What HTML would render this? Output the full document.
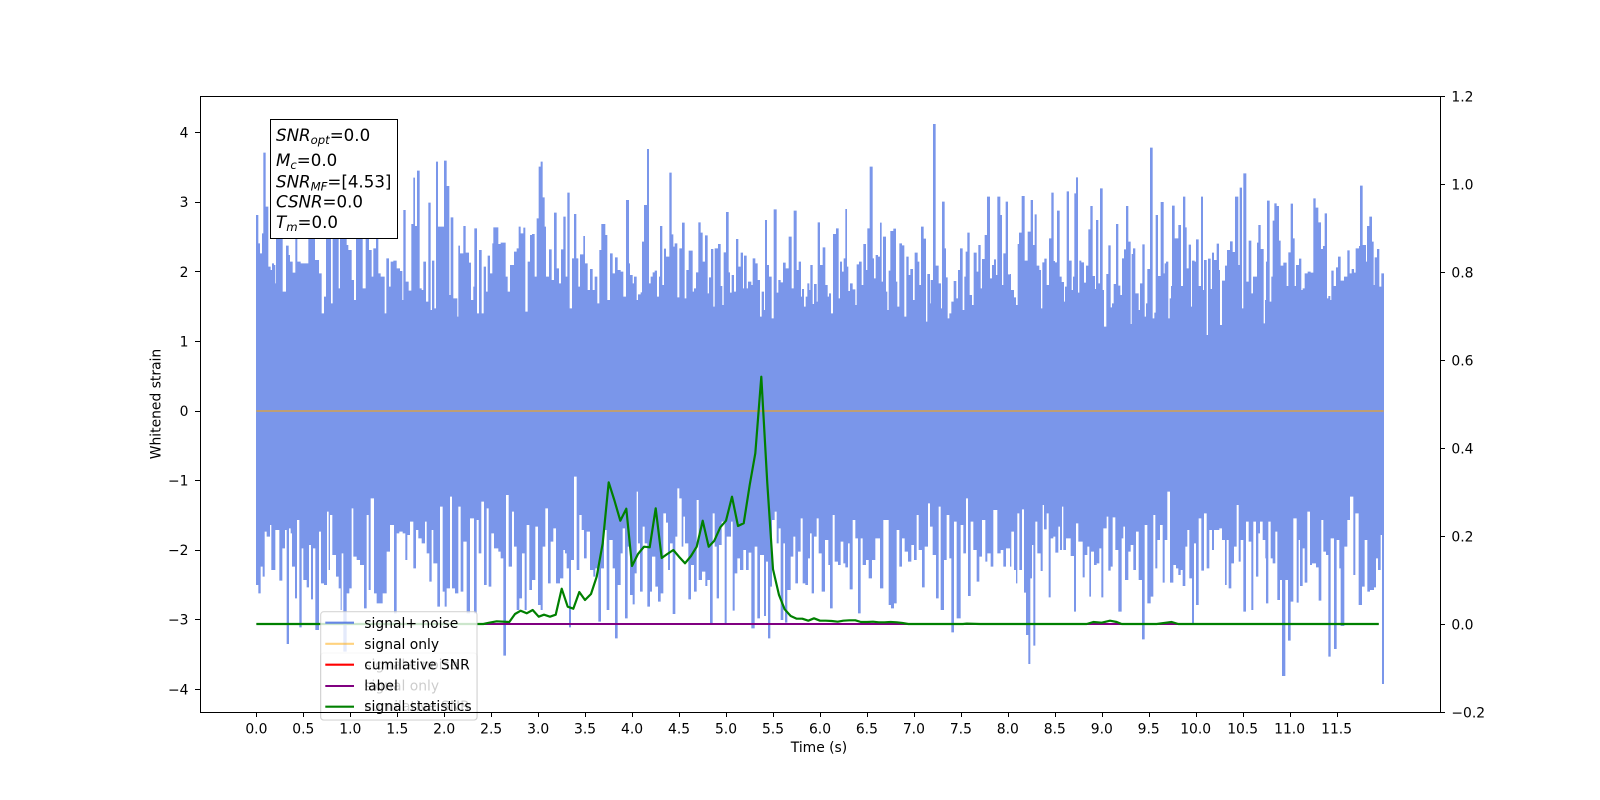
<!DOCTYPE html>
<html>
<head>
<meta charset="utf-8">
<style>
html,body{margin:0;padding:0;background:#fff;width:1600px;height:800px;overflow:hidden}
svg{display:block}
text{font-family:"DejaVu Sans",sans-serif;font-size:13.89px;fill:#000}
</style>
</head>
<body>
<svg width="1600" height="800" viewBox="0 0 1600 800" xmlns="http://www.w3.org/2000/svg">
<rect width="1600" height="800" fill="#fff"/>

<g fill="#7a96ea">
<rect x="256" y="339" width="1128" height="132"/>
<path transform="translate(250,100) scale(.33333)" d="M18 720V345H25V430H30V460H36V400H40V158H47V320H55V500H62V510H66V490H72V495H76V550H78V415H98V575H108V437H116V465H120V485H128V518H136V415H142V485H152V490H175V415H195V480H207V520H215V640H222V590H228V415H243V610H248V415H266V565H270V415H290V435H295V450H305V540H312V600H318V415H338V565H347V415H357V450H365V530H370V445H378V415H385V520H392V530H404V640H409V475H417V560H422V485H430V482H440V505H450V513H457V600H460V330H467V545H476V572H484V372H490V233H495V378H501V212H509V565H515V570H520V485H528V605H535V308H542V630H546V482H553V625H558V185H564V380H582V182H590V258H598V585H602V352H610V595H622V650H625V437H630V460H640V378H647V458H657V488H663V600H670V560H673V385H681V640H687V450H695V640H701V500H708V575H713V467H720V520H727V430H730V382H745V432H752V428H767V530H773V575H780V495H792V455H800V445H806V380H812V400H820V383H826V635H833V485H840V405H846V402H854V530H860V355H866V200H872V185H878V292H884V380H888V530H897V448H905V540H912V338H920V505H927V550H933V448H940V350H947V530H952V278H959V625H966V475H972V342H979V475H985V560H990V463H1000V408H1005V490H1013V570H1020V507H1028V570H1034V530H1042V610H1048V450H1054V372H1066V405H1072V600H1080V460H1088V520H1095V472H1103V510H1112V515H1120V590H1128V300H1137V490H1140V720Z"/>
<path transform="translate(630,100) scale(.33333)" d="M0 720V525H8V550H12V530H20V600H24V583H32V577H36V425H42V315H51V147H57V550H62V530H68V517H74V512H81V590H87V530H90V378H97V555H102V446H108V470H118V218H125V403H130V440H134V430H142V592H148V445H156V368H164V595H169V510H176V452H188V575H192V565H198V517H205V367H212V398H218V485H225V406H233V580H237V532H243V447H250V620H254V445H264V432H272V558H277V615H281V457H288V336H296V517H300V578H305V525H312V575H318V417H325V500H332V458H339V565H342V467H350V565H354V545H364V555H368V475H376V490H383V540H390V650H395V575H402V630H405V360H411V495H417V530H425V655H431V328H440V578H445V540H452V547H459V488H467V505H476V410H485V565H491V332H500V510H506V485H513V590H516V567H522V620H527V590H532V550H538V570H541V495H548V612H552V552H560V605H563V367H570V495H578V442H586V555H593V590H597V580H603V640H609V402H618V385H626V595H630V485H636V515H641V475H646V327H651V500H655V573H660V550H668V568H676V615H680V493H687V485H695V555H700V432H708V510H712V385H719V200H728V475H732V535H737V465H744V470H750V368H755V545H759V410H768V575H772V630H776V512H781V393H790V386H798V545H802V620H808V430H816V436H823V650H829V470H836V525H841V507H849V600H854V458H863V485H868V555H873V380H881V416H888V665H892V522H900V610H902V540H909V72H917V497H926V550H933V625H936V305H944V445H948V532H953V655H958V640H964V605H971V543H979V595H984V510H990V445H998V630H1003V530H1007V455H1012V398H1019V585H1026V615H1031V458H1040V515H1045V435H1052V565H1056V477H1064V405H1071V290H1080V535H1086V495H1092V478H1098V525H1102V290H1111V345H1116V555H1120V460H1127V305H1134V523H1140V720Z"/>
<path transform="translate(1010,100) scale(.33333)" d="M0 720V522H3V570H12V592H18V615H23V432H27V398H35V288H44V482H53V395H62V300H69V435H74V343H80V497H88V510H93V625H97V487H103V476H110V555H117V415H124V278H131V483H135V487H141V332H149V530H155V546H162V605H165V560H170V274H177V482H185V570H189V530H193V280H198V232H204V578H208V482H214V487H222V548H228V497H235V388H241V318H248V528H255V567H258V360H265V550H270V265H278V570H282V680H289V522H295V436H302V622H306V610H311V552H318V372H325V557H331V585H336V475H342V448H348V318H355V425H362V672H365V462H369V445H376V580H386V630H390V550H397V433H404V650H408V610H412V507H420V143H428V655H433V638H437V345H444V528H452V306H461V520H464V490H468V485H475V655H479V595H483V558H486V317H494V415H505V375H513V558H519V290H526V382H530V505H536V434H543V620H546V482H554V485H558V418H566V558H573V290H579V570H582V480H590V705H594V476H602V567H606V458H612V480H620V431H627V510H630V675H636V542H645V497H651V450H660V424H668V456H675V290H685V495H689V263H696V625H700V220H709V545H716V422H724V580H729V530H741V428H745V375H752V447H761V670H765V600H768V485H771V302H779V605H784V530H788V362H793V310H800V318H807V422H812V497H820V488H830V558H835V457H842V311H849V415H854V558H858V495H867V476H874V570H878V565H884V520H893V515H902V518H910V295H917V323H925V367H933V447H939V438H944V340H951V595H955V588H961V600H964V512H971V558H978V502H984V470H992V542H1002V530H1012V451H1019V520H1025V507H1032V518H1037V445H1047V438H1050V257H1058V435H1068V485H1071V378H1078V350H1086V425H1091V555H1094V472H1101V447H1108V560H1114V520H1122V720Z"/>
<path transform="translate(250,470) scale(.33333)" d="M18 0V345H25V370H32V290H38V320H44V185H50V200H60V165H64V300H76V180H88V332H97V235H105V180H110V522H117V175H122V190H126V290H135V385H141V150H148V472H155V235H160V330H170V352H177V225H183V388H189V235H196V480H207V185H213V340H222V345H231V125H236V300H240V135H247V255H258V320H266V355H272V420H275V250H280V545H290V370H298V355H305V115H310V260H320V270H330V285H342V415H350V135H356V360H362V85H372V370H380V400H398V370H410V245H420V165H432V430H440V190H448V185H458V190H466V270H472V195H480V155H490V295H498V180H505V205H515V220H525V155H530V250H538V335H545V180H550V280H562V410H570V110H578V365H584V410H590V355H600V80H606V355H615V370H625V110H632V365H640V215H650V430H660V145H672V430H680V150H686V250H694V95H702V345H710V115H716V350H724V190H732V235H745V245H752V265H760V557H768V75H776V290H786V125H792V230H800V420H808V385H816V250H824V420H830V165H838V360H846V330H856V170H864V405H872V420H878V230H886V115H894V340H902V215H910V175H918V340H930V325H940V240H945V250H950V295H957V472H963V270H972V20H980V300H988V135H995V180H1002V265H1010V185H1020V300H1030V320H1036V295H1045V455H1053V295H1062V180H1070V420H1078V210H1088V295H1095V505H1103V345H1112V250H1118V175H1125V445H1133V230H1140V0Z"/>
<path transform="translate(630,470) scale(.33333)" d="M0 0V375H8V403H14V310H20V65H24V220H30V365H38V170H44V220H52V410H60V365H66V260H76V350H84V395H92V370H100V130H108V158H114V300H120V220H128V432H136V200H142V55H148V85H155V230H160V140H165V220H175V388H183V285H192V365H200V90H206V330H216V305H226V348H232V330H240V460H248V130H254V230H260V385H267V225H275V155H284V465H290V200H303V155H308V422H314V310H322V265H330V300H340V240H348V300H356V248H364V475H374V230H382V445H390V255H402V438H408V275H414V505H421V350H426V150H434V125H440V220H446V175H452V450H460V220H465V458H472V360H482V260H490V200H496V340H504V245H512V145H518V340H526V345H534V265H540V190H545V370H552V200H560V145H566V250H575V365H585V210H595V285H600V415H608V135H614V275H624V285H632V215H640V280H646V292H654V220H659V358H668V150H676V205H684V430H692V205H698V285H708V270H716V325H726V270H736V205H750V355H760V150H776V405H783V415H792V400H800V180H808V290H816V205H824V245H834V275H844V225H852V270H860V135H866V240H876V352H884V230H894V100H900V170H908V255H918V385H926V110H932V420H942V270H950V135H958V265H964V487H972V155H980V445H992V165H1000V250H1008V85H1014V378H1022V155H1030V240H1040V335H1048V260H1056V150H1066V275H1072V250H1082V290H1090V120H1102V250H1112V240H1120V290H1128V235H1140V0Z"/>
<path transform="translate(1010,470) scale(.33333)" d="M0 0V290H4V185H12V300H18V340H22V130H28V300H36V118H42V368H48V495H55V582H61V325H66V225H70V527H76V155H82V250H92V303H98V105H102V178H110V130H116V382H122V205H130V200H136V248H145V170H150V240H156V110H160V240H168V205H182V258H192V425H198V160H205V215H218V322H224V255H232V230H238V380H243V245H252V285H260V280H268V235H274V382H280V175H290V140H295V302H302V290H308V142H316V240H325V425H335V205H340V170H345V330H355V245H362V225H370V300H378V185H386V330H396V508H404V165H412V400H422V380H430V135H436V295H442V210H450V165H458V338H464V210H472V65H480V338H490V285H498V295H505V315H512V300H518V348H526V230H532V180H538V325H546V460H552V220H558V405H566V145H574V302H582V130H590V295H598V180H606V240H612V180H628V175H636V210H645V345H650V210H656V355H664V280H672V230H680V105H686V275H692V210H700V425H708V155H716V215H724V420H730V155H738V320H745V190H750V155H758V210H766V265H768V400H775V155H782V265H788V280H796V185H802V390H810V330H816V618H826V330H834V512H842V395H850V145H860V398H866V210H870V348H878V235H884V338H892V125H900V285H906V280H918V292H926V392H934V150H940V245H948V255H955V560H962V205H972V537H980V210H988V295H992V468H1003V230H1012V150H1020V80H1030V315H1036V130H1046V405H1056V350H1064V210H1072V365H1080V360H1092V352H1098V265H1104V300H1112V195H1116V642H1122V0Z"/>
</g>

<line x1="256.4" y1="411" x2="1383.6" y2="411" stroke="#ffa500" stroke-opacity=".5" stroke-width="2"/>

<!-- first legend -->
<rect x="320.7" y="653" width="156.3" height="67" rx="3" fill="#fff" fill-opacity=".8" stroke="#ccc" stroke-opacity=".8" stroke-width="1.1"/>
<text x="364.3" y="669.5">signal+ noise</text>
<text x="364.3" y="690.5">signal only</text>
<text x="364.3" y="711">cumilative SNR</text>

<!-- right axis lines -->
<line x1="256.4" y1="624" x2="1378.7" y2="624" stroke="#800080" stroke-width="2.08"/>
<polyline fill="none" stroke="#008000" stroke-width="2.2" stroke-linejoin="round" points="256.4,624 483.3,624 489.3,622.7 496.7,621.3 509.3,622 515,614 520.7,610.7 526.7,613.3 532.7,610 538.7,616.7 544,614.7 550,616.7 555.7,614.7 561.7,588.7 567.7,606.7 573.3,608.7 579.3,592 585,600 591,594 596.7,576.7 602.7,543.3 608.7,482.3 614.3,500 620.3,520.7 626.3,508.7 632,566 638,554 644,546.7 649.7,547.3 655.7,508.3 661.7,558 667.3,554 673.3,550 679,556.7 685,563.3 691,556 696.7,546.7 702.7,520.7 708.7,546.7 714.3,540.7 720.3,527.3 726,520.7 732,496.7 738,526 743.7,523.3 749.7,485 755.3,453.3 761.3,376.7 767.3,483.3 773,569.3 779,595 784.7,609.3 790.7,616 796.7,618.7 802.3,618.7 808.3,620.7 814,618.3 820,620.7 825.7,620.7 831.7,621 837.7,621.7 843.3,620.7 849.3,620.3 855.3,620.3 861,622 867,622 873,621.7 878.7,622.3 884.7,622.3 890.7,622 896.7,622.3 902.3,623 908.3,624 963,624 966.7,623.6 980,624 1086.7,624 1093.3,622 1101.7,622.7 1110,620.7 1116.7,622 1121.7,624 1156.7,624 1171.7,622 1178.3,624 1378.7,624"/>

<!-- second legend -->
<rect x="320.7" y="611.7" width="156.3" height="108.3" rx="3" fill="#fff" fill-opacity=".8" stroke="#ccc" stroke-opacity=".8" stroke-width="1.1"/>
<g stroke-width="2.08">
<line x1="325.3" x2="354" y1="622.7" y2="622.7" stroke="#4169e1" stroke-opacity=".8"/>
<line x1="325.3" x2="354" y1="643.8" y2="643.8" stroke="#ffa500" stroke-opacity=".5"/>
<line x1="325.3" x2="354" y1="664.7" y2="664.7" stroke="#f00"/>
<line x1="325.3" x2="354" y1="686" y2="686" stroke="#800080"/>
<line x1="325.3" x2="354" y1="706.7" y2="706.7" stroke="#008000"/>
</g>
<text x="364.3" y="628">signal+ noise</text>
<text x="364.3" y="648.8">signal only</text>
<text x="364.3" y="669.5">cumilative SNR</text>
<text x="364.3" y="690.5">label</text>
<text x="364.3" y="711">signal statistics</text>

<!-- info box -->
<rect x="270.5" y="119.5" width="127" height="119" fill="#fff" stroke="#000" stroke-width="1" shape-rendering="crispEdges"/>
<g style="font-size:16.67px">
<text x="276" y="141" style="font-size:16.67px"><tspan font-style="italic">SNR</tspan><tspan font-style="italic" dy="3" style="font-size:11.67px">opt</tspan><tspan dy="-3">=0.0</tspan></text>
<text x="276" y="166" style="font-size:16.67px"><tspan font-style="italic">M</tspan><tspan font-style="italic" dy="3" style="font-size:11.67px">c</tspan><tspan dy="-3">=0.0</tspan></text>
<text x="276" y="187.7" style="font-size:16.67px"><tspan font-style="italic">SNR</tspan><tspan font-style="italic" dy="3" style="font-size:11.67px">MF</tspan><tspan dy="-3">=[4.53]</tspan></text>
<text x="276" y="207.7" style="font-size:16.67px"><tspan font-style="italic">CSNR</tspan>=0.0</text>
<text x="276" y="228" style="font-size:16.67px"><tspan font-style="italic">T</tspan><tspan font-style="italic" dy="3" style="font-size:11.67px">m</tspan><tspan dy="-3">=0.0</tspan></text>
</g>

<!-- axes frame -->
<rect x="200.5" y="96.5" width="1240" height="616" fill="none" stroke="#000" stroke-width="1" shape-rendering="crispEdges"/>

<!-- ticks -->
<path stroke="#000" stroke-width="1" fill="none" shape-rendering="crispEdges" d="M256.5 712v5M303.5 712v5M350.5 712v5M397.5 712v5M444.5 712v5M491.5 712v5M538.5 712v5M585.5 712v5M632.5 712v5M679.5 712v5M726.5 712v5M773.5 712v5M820.5 712v5M867.5 712v5M914.5 712v5M961.5 712v5M1008.5 712v5M1055.5 712v5M1102.5 712v5M1149.5 712v5M1196.5 712v5M1243.5 712v5M1290.5 712v5M1337.5 712v5M200 132.5h-5M200 202.5h-5M200 271.5h-5M200 341.5h-5M200 411.5h-5M200 480.5h-5M200 550.5h-5M200 619.5h-5M200 689.5h-5M1440 96.5h5M1440 184.5h5M1440 272.5h5M1440 360.5h5M1440 448.5h5M1440 536.5h5M1440 624.5h5M1440 712.5h5"/>

<g text-anchor="middle">
<text x="256.4" y="733.5">0.0</text><text x="303.3" y="733.5">0.5</text><text x="350.3" y="733.5">1.0</text><text x="397.3" y="733.5">1.5</text><text x="444.2" y="733.5">2.0</text><text x="491.2" y="733.5">2.5</text><text x="538.2" y="733.5">3.0</text><text x="585.1" y="733.5">3.5</text><text x="632.1" y="733.5">4.0</text><text x="679.1" y="733.5">4.5</text><text x="726" y="733.5">5.0</text><text x="773" y="733.5">5.5</text><text x="820" y="733.5">6.0</text><text x="866.9" y="733.5">6.5</text><text x="913.9" y="733.5">7.0</text><text x="960.9" y="733.5">7.5</text><text x="1007.8" y="733.5">8.0</text><text x="1054.8" y="733.5">8.5</text><text x="1101.8" y="733.5">9.0</text><text x="1148.7" y="733.5">9.5</text><text x="1195.7" y="733.5">10.0</text><text x="1242.7" y="733.5">10.5</text><text x="1289.6" y="733.5">11.0</text><text x="1336.6" y="733.5">11.5</text>
<text x="819" y="752">Time (s)</text>
<text transform="translate(160.5,404) rotate(-90)">Whitened strain</text>
</g>
<g text-anchor="end">
<text x="188.5" y="137.6">4</text><text x="188.5" y="207.2">3</text><text x="188.5" y="276.8">2</text><text x="188.5" y="346.4">1</text><text x="188.5" y="416">0</text><text x="188.5" y="485.5">−1</text><text x="188.5" y="555.1">−2</text><text x="188.5" y="624.7">−3</text><text x="188.5" y="694.3">−4</text>
</g>
<g>
<text x="1451.4" y="101.3">1.2</text><text x="1451.4" y="189.3">1.0</text><text x="1451.4" y="277.3">0.8</text><text x="1451.4" y="365.3">0.6</text><text x="1451.4" y="453.3">0.4</text><text x="1451.4" y="541.3">0.2</text><text x="1451.4" y="629.3">0.0</text><text x="1451.4" y="717.3">−0.2</text>
</g>
</svg>
</body>
</html>
